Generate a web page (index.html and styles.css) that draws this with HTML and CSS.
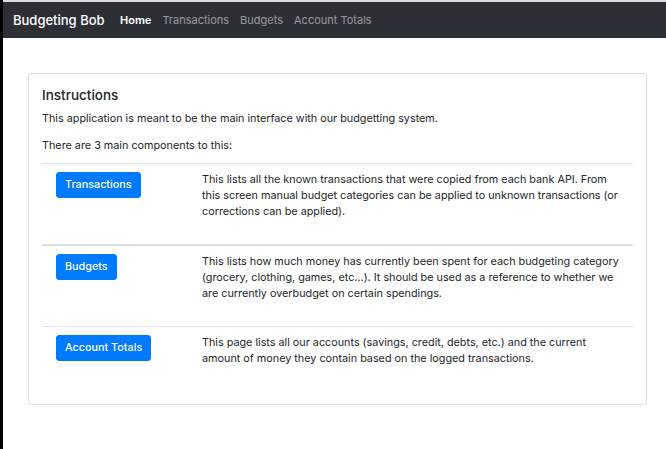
FILE: index.html
```html
<!DOCTYPE html>
<html lang="en">
<head>
<meta charset="utf-8">
<title>Budgeting Bob</title>
<link rel="stylesheet" href="styles.css">
</head>
<body>
<div class="edge"></div>
<div class="page">
  <div class="topline"></div>
  <nav class="navbar">
    <a class="brand" href="#">Budgeting Bob</a>
    <a class="nav-link active" href="#">Home</a>
    <a class="nav-link" href="#">Transactions</a>
    <a class="nav-link" href="#">Budgets</a>
    <a class="nav-link" href="#">Account Totals</a>
  </nav>
  <main class="container">
    <section class="card">
      <h5 class="card-title">Instructions</h5>
      <p class="intro">This application is meant to be the main interface with our budgetting system.</p>
      <p class="intro last">There are 3 main components to this:</p>
      <table class="table">
        <thead>
          <tr>
            <th class="cell-btn"><a class="btn" href="#">Transactions</a></th>
            <th class="cell-desc"><p>This lists all the known transactions that were copied from each bank API. From this screen manual budget categories can be applied to unknown transactions (or corrections can be applied).</p></th>
          </tr>
        </thead>
        <tbody>
          <tr>
            <td class="cell-btn"><a class="btn" href="#">Budgets</a></td>
            <td class="cell-desc"><p>This lists how much money has currently been spent for each budgeting category (grocery, clothing, games, etc...). It should be used as a reference to whether we are currently overbudget on certain spendings.</p></td>
          </tr>
          <tr>
            <td class="cell-btn"><a class="btn" href="#">Account Totals</a></td>
            <td class="cell-desc"><p>This page lists all our accounts (savings, credit, debts, etc.) and the current amount of money they contain based on the logged transactions.</p></td>
          </tr>
        </tbody>
      </table>
    </section>
  </main>
</div>
</body>
</html>
```
FILE: styles.css
```css
* { box-sizing: border-box; }
html, body { margin: 0; padding: 0; height: 100%; }
body {
  display: flex;
  font-family: Inter, "Liberation Sans", Arial, sans-serif;
  font-size: 10.8px;
  line-height: 16px;
  color: #212529;
  background: #fff;
  overflow: hidden;
}
.edge { width: 3px; background: #000; flex: none; }
.page { flex: 1; min-width: 0; }
.topline { height: 2px; background: #dcdcdc; }
.navbar {
  display: flex;
  align-items: center;
  height: 36px;
  padding: 0 11px 0 10px;
  background: #2c3036;
}
.brand {
  font-size: 13px;
  font-weight: 500;
  color: #fff;
  text-decoration: none;
  margin-right: 10px;
}
.nav-link {
  padding: 0 5.5px;
  color: rgba(255,255,255,.5);
  text-decoration: none;
  font-size: 11px;
}
.nav-link.active { color: #fff; font-weight: 600; }
.container { padding: 35px 19px 0 25px; }
.card {
  border: 1px solid rgba(0,0,0,.13);
  border-radius: 3px;
  padding: 13px 13px 13px 13px;
}
.card-title {
  margin: 0 0 7px;
  font-size: 13.5px;
  font-weight: 500;
  line-height: 17px;
}
.intro { margin: 0 0 11px; }
.intro.last { margin-bottom: 9px; }
.table { width: 100%; border-collapse: collapse; }
.table th, .table td {
  text-align: left;
  font-weight: normal;
  vertical-align: top;
  padding: 8px 14px 8px 14px;
  border-top: 1px solid #dee2e6;
}
.table thead th { border-bottom: 2px solid #dee2e6; }
.cell-btn { width: 146px; }
.cell-desc p { margin: 0 0 16px; }
.btn {
  display: inline-block;
  padding: 4px 8px;
  border: 1px solid #007bff;
  border-radius: 3px;
  background: #007bff;
  color: #fff;
  text-decoration: none;
  font-size: 10.8px;
  font-weight: 500;
  line-height: 16px;
  white-space: nowrap;
}
```
